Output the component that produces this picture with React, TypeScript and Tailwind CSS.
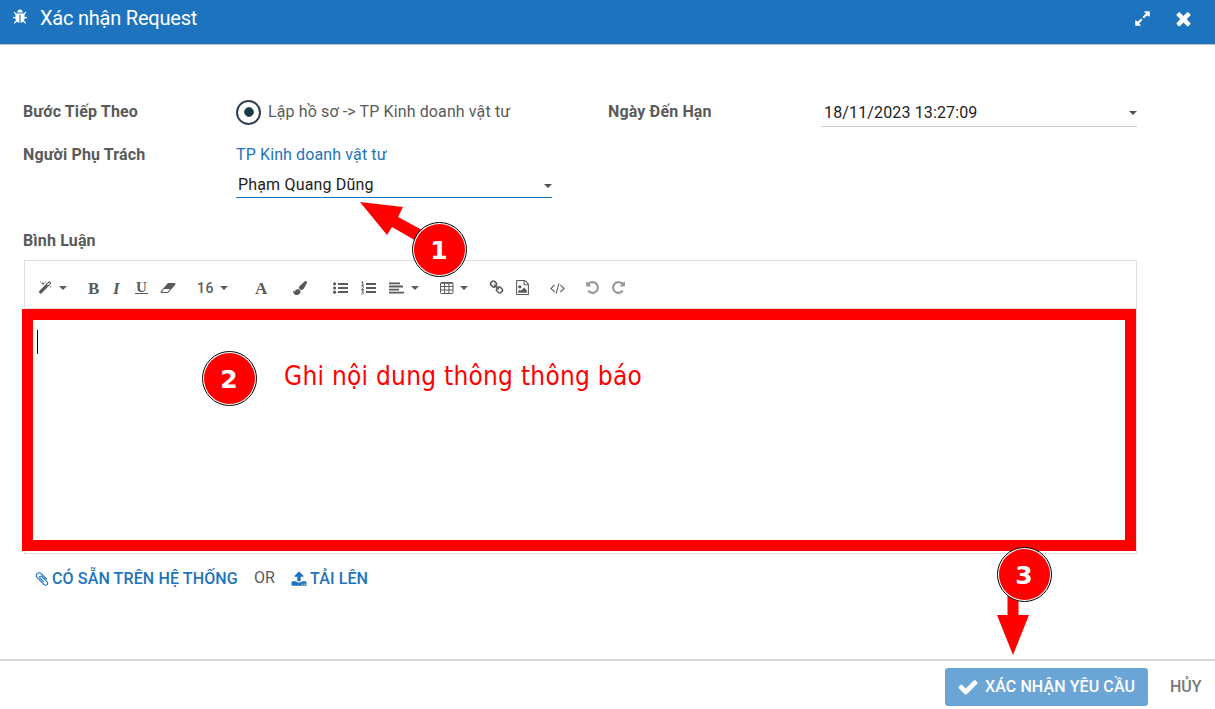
import type { ReactNode } from "react";

type GlyphProps = { d: string; box?: string; className?: string };

function Glyph({ d, box = "0 0 1792 1792", className = "" }: GlyphProps) {
  return (
    <svg viewBox={box} fill="currentColor" className={`shrink-0 ${className}`}>
      <path d={d} />
    </svg>
  );
}

const BUG =
  "M1696 960q0 26-19 45t-45 19h-224q0 171-67 290l208 209q19 19 19 45t-19 45q-18 19-45 19t-45-19l-198-197q-5 5-15 13t-42 28.5-65 36.5-82 29-97 13v-896h-128v896q-51 0-101.5-13.5t-87-33-66-39-43.5-32.5l-15-14-183 207q-20 21-48 21-24 0-43-16-19-18-20.5-44.5t15.5-46.5l202-227q-58-114-58-274h-224q-26 0-45-19t-19-45 19-45 45-19h224v-294l-173-173q-19-19-19-45t19-45 45-19 45 19l173 173h844l173-173q19-19 45-19t45 19 19 45-19 45l-173 173v294h224q26 0 45 19t19 45zm-480-576h-640q0-133 93.5-226.5t226.5-93.5 226.5 93.5 93.5 226.5z";
const CLOSE =
  "M1490 1322q0 40-28 68l-136 136q-28 28-68 28t-68-28l-294-294-294 294q-28 28-68 28t-68-28l-136-136q-28-28-28-68t28-68l294-294-294-294q-28-28-28-68t28-68l136-136q28-28 68-28t68 28l294 294 294-294q28-28 68-28t68 28l136 136q28 28 28 68t-28 68l-294 294 294 294q28 28 28 68z";
const EXPAND =
  "M883 1056q0 13-10 23l-332 332 144 144q19 19 19 45t-19 45-45 19h-448q-26 0-45-19t-19-45v-448q0-26 19-45t45-19 45 19l144 144 332-332q10-10 23-10t23 10l114 114q10 10 10 23zm781-864v448q0 26-19 45t-45 19-45-19l-144-144-332 332q-10 10-23 10t-23-10l-114-114q-10-10-10-23t10-23l332-332-144-144q-19-19-19-45t19-45 45-19h448q26 0 45 19t19 45z";
const CHECK =
  "M1671 566q0 40-28 68l-724 724-136 136q-28 28-68 28t-68-28l-136-136-362-362q-28-28-28-68t28-68l136-136q28-28 68-28t68 28l294 295 656-657q28-28 68-28t68 28l136 136q28 28 28 68z";
const UPLOAD =
  "M1344 1472q0-26-19-45t-45-19-45 19-19 45 19 45 45 19 45-19 19-45zm256 0q0-26-19-45t-45-19-45 19-19 45 19 45 45 19 45-19 19-45zm128-224v320q0 40-28 68t-68 28h-1472q-40 0-68-28t-28-68v-320q0-40 28-68t68-28h427q21 56 70.5 92t110.5 36h256q61 0 110.5-36t70.5-92h427q40 0 68 28t28 68zm-325-648q-17 40-59 40h-256v448q0 26-19 45t-45 19h-256q-26 0-45-19t-19-45v-448h-256q-42 0-59-40-17-39 14-69l448-448q18-19 45-19t45 19l448 448q31 30 14 69z";
const CLIP =
  "M1596 1385q0 117-79 196t-196 79q-135 0-235-100l-777-776q-113-115-113-271 0-159 110-270t269-111q158 0 273 113l605 606q10 10 10 22 0 16-30.5 46.5t-46.5 30.5q-13 0-23-10l-606-607q-79-77-181-77-106 0-179 75t-73 181q0 105 76 181l776 777q63 63 145 63 64 0 106-42t42-106q0-82-63-145l-581-581q-26-24-60-24-29 0-48 19t-19 48q0 32 25 59l410 410q10 10 10 22 0 16-31 47t-47 31q-12 0-22-10l-410-410q-63-61-63-149 0-82 57-139t139-57q88 0 149 63l581 581q100 98 100 235z";
const UNDO =
  "M1664 896q0 156-61 298t-164 245-245 164-298 61q-172 0-327-72.5t-264-204.5q-7-10-6.5-22.5t8.5-20.5l137-138q10-9 25-9 16 2 23 12 73 95 179 147t225 52q104 0 198.5-40.5t163.5-109.5 109.5-163.5 40.5-198.5-40.5-198.5-109.5-163.5-163.5-109.5-198.5-40.5q-98 0-188 35.5t-160 101.5l137 138q31 30 14 69-17 40-59 40h-448q-26 0-45-19t-19-45v-448q0-42 40-59 39-17 69 14l130 129q107-101 244.5-156.5t284.5-55.5q156 0 298 61t245 164 164 245 61 298z";
const LINK =
  "M1520 1216q0-40-28-68l-208-208q-28-28-68-28-42 0-72 32 3 3 19 18.5t21.5 21.5 15 19 13 25.5 3.5 27.5q0 40-28 68t-68 28q-15 0-27.5-3.5t-25.5-13-19-15-21.5-21.5-18.5-19q-33 31-33 73 0 40 28 68l206 207q27 27 68 27 40 0 68-26l147-146q28-28 28-67zm-703-705q0-40-28-68l-206-207q-28-28-68-28-39 0-68 27l-147 146q-28 28-28 67 0 40 28 68l208 208q27 27 68 27 42 0 72-31-3-3-19-18.5t-21.5-21.5-15-19-13-25.5-3.5-27.5q0-40 28-68t68-28q15 0 27.5 3.5t25.5 13 19 15 21.5 21.5 18.5 19q33-31 33-73zm895 705q0 120-85 203l-147 146q-83 83-203 83-121 0-204-85l-206-207q-83-83-83-203 0-123 88-209l-88-88q-86 88-208 88-120 0-204-84l-208-208q-84-84-84-204t85-203l147-146q83-83 203-83 121 0 204 85l206 207q83 83 83 203 0 123-88 209l88 88q86-88 208-88 120 0 204 84l208 208q84 84 84 204z";
const ERASER =
  "M960 1408l336-384h-768l-336 384h768zm1013-1077q15 34 9.500 71.500t-30.500 65.500l-896 1024q-38 44-96 44h-768q-38 0-69.500-20.500t-47.500-54.500q-15-34-9.500-71.500t30.500-65.500l896-1024q38-44 96-44h768q38 0 69.500 20.500t47.500 54.500z";
const CODE =
  "M617 1399l-50 50q-10 10-23 10t-23-10l-466-466q-10-10-10-23t10-23l466-466q10-10 23-10t23 10l50 50q10 10 10 23t-10 23l-393 393 393 393q10 10 10 23t-10 23zm591-1067l-373 1291q-4 13-15.5 19.5t-23.5 2.5l-62-17q-13-4-19.5-15.5t-2.500-24.500l373-1291q4-13 15.500-19.500t23.500-2.500l62 17q13 4 19.500 15.500t2.500 24.500zm657 651l-466 466q-10 10-23 10t-23-10l-50-50q-10-10-10-23t10-23l393-393-393-393q-10-10-10-23t10-23l50-50q10-10 23-10t23 10l466 466q10 10 10 23t-10 23z";
const BRUSH =
  "M1615 0q70 0 122.5 46.5t52.5 116.5q0 63-45 151-332 629-465 752-97 91-218 91-126 0-216.5-92.5t-90.5-219.5q0-128 92-212l638-579q59-54 130-54zm-909 1034q39 76 106.5 130t150.5 76l1 71q4 213-129.5 347t-348.5 134q-123 0-218-46.5t-152.5-127.5-86.5-183-29-220q7 5 41 30t62 44.5 59 36.5 46 17q41 0 55-37 25-66 57.5-112.5t69.5-76 88-47.5 103-25.5 125-10.5z";
const MAGIC =
  "M1254 581l293-293-107-107-293 293zm447-293q0 27-18 45l-1286 1286q-18 18-45 18t-45-18l-198-198q-18-18-18-45t18-45l1286-1286q18-18 45-18t45 18l198 198q18 18 18 45zm-1351-190l98 30-98 30-30 98-30-98-98-30 98-30 30-98zm350 162l196 60-196 60-60 196-60-196-196-60 196-60 60-196zm930 478l98 30-98 30-30 98-30-98-98-30 98-30 30-98zm-640-640l98 30-98 30-30 98-30-98-98-30 98-30 30-98z";
const PICTURE =
  "M1596 380q28 28 48 76t20 88v1152q0 40-28 68t-68 28h-1344q-40 0-68-28t-28-68v-1600q0-40 28-68t68-28h896q40 0 88 20t76 48zm-444-244v376h376q-10-29-22-41l-313-313q-12-12-41-22zm384 1528v-1024h-416q-40 0-68-28t-28-68v-416h-768v1536h1280zm-128-448v320h-1024v-192l192-192 128 128 384-384zm-832-192q-80 0-136-56t-56-136 56-136 136-56 136 56 56 136-56 136-136 56z";

function Caret({ className = "" }: { className?: string }) {
  return (
    <svg viewBox="0 0 8 4" fill="currentColor" className={`h-1 w-2 shrink-0 ${className}`}>
      <path d="M0 0h8L4 4z" />
    </svg>
  );
}

function Serif({ children, className = "" }: { children: ReactNode; className?: string }) {
  return (
    <span className={`font-['Liberation_Serif',serif] text-[17px] leading-5 ${className}`}>
      {children}
    </span>
  );
}

function Toolbar() {
  return (
    <div className="flex h-12 items-center border-b border-[#ddd] pt-1.5 pl-[13px] text-[#5a5a5a]">
      <Glyph d={MAGIC} className="size-3.5" />
      <Caret className="ml-[7px]" />
      <Serif className="mt-0.5 ml-[21px] w-[11px] font-bold">B</Serif>
      <Serif className="mt-0.5 ml-[14px] w-[9px] font-bold italic">I</Serif>
      <span className="ml-[13px] flex h-[13px] w-[13px] justify-center border-b border-[#5a5a5a]">
        <Serif className="-mt-1 text-[15px]! font-bold">U</Serif>
      </span>
      <Glyph d={ERASER} box="0 0 2048 1792" className="ml-3 h-3.5 w-4" />
      <span className="mt-px ml-[21px] w-4 text-[14px] font-medium tracking-[0.5px]">16</span>
      <Caret className="ml-[7px]" />
      <Serif className="mt-0.5 ml-[27px] w-3 font-bold">A</Serif>
      <Glyph d={BRUSH} className="ml-[26px] size-3.5" />
      <svg viewBox="0 0 15 12" fill="currentColor" className="ml-[26px] h-3 w-[15px]">
        <circle cx="1.600" cy="1.800" r="1.600" />
        <circle cx="1.600" cy="6" r="1.600" />
        <circle cx="1.600" cy="10.200" r="1.600" />
        <path d="M5 1h10v2H5zM5 5h10v2H5zM5 9h10V11H5z" />
      </svg>
      <svg viewBox="0 0 15 14" fill="none" stroke="currentColor" className="ml-[13px] h-3.5 w-[15px]">
        <path d="M5 3h10M5 7h10M5 11h10" strokeWidth="2" />
        <path d="M.5 1.200 1.700.5v3.700M.4 4.200h2.500M.5 6q1-1 1.900-.3.500.8-.5 1.500L.7 8.500h2.200M.4 9.900h2L1.500 11.300q1.300.2.900 1.200-.7 1-2 .3" strokeWidth="1" />
      </svg>
      <svg viewBox="0 0 15 12" fill="currentColor" className="ml-[13px] h-3 w-[15px]">
        <path d="M0 .5h11v1.800H0zM0 3.600h14v1.800H0zM0 6.700h10v1.800H0zM0 9.800h15v1.800H0z" />
      </svg>
      <Caret className="ml-[7px]" />
      <svg viewBox="0 0 14 12" fill="none" stroke="currentColor" className="ml-[21px] h-3 w-3.5">
        <rect x=".5" y=".5" width="12.500" height="11" rx="1" />
        <path d="M.5 1.300H13M.5 4.500H13M.5 8H13M4.600 1v10M8.900 1v10" />
      </svg>
      <Caret className="ml-1.5" />
      <Glyph d={LINK} className="ml-[21px] size-[15px]" />
      <Glyph d={PICTURE} className="ml-[11px] size-[15px]" />
      <Glyph d={CODE} box="0 0 1920 1792" className="ml-5 h-3.5 w-[15px]" />
      <Glyph d={UNDO} className="ml-5 size-[15px] text-[#999]" />
      <Glyph d={UNDO} className="ml-[11px] size-[15px] -scale-x-100 text-[#999]" />
    </div>
  );
}

function Step({ n, className }: { n: number; className: string }) {
  return (
    <div
      className={`absolute flex size-[55px] items-center justify-center rounded-full border-[1.500px] border-black bg-white p-[1px] ${className}`}
    >
      <div className="flex size-full items-center justify-center rounded-full bg-[#f00] pt-[3px] font-['DejaVu_Sans',sans-serif] text-[25px] leading-none font-bold text-white">
        {n}
      </div>
    </div>
  );
}

export default function App() {
  return (
    <div className="relative flex h-[709px] w-[1215px] flex-col overflow-hidden bg-white font-['Roboto',sans-serif] text-[16px] leading-6 text-[#5a5a5a]">
      <header className="flex h-[45px] shrink-0 items-center border-b border-[#bcc5cc] bg-[#1e73be] pr-[21px] pb-2 pl-3 text-white">
        <Glyph d={BUG} className="-mt-0.5 size-4" />
        <h1 className="ml-3 grow text-[20px] leading-6 tracking-[-0.22px]">Xác nhận Request</h1>
        <Glyph d={EXPAND} className="size-[17px]" />
        <Glyph d={CLOSE} className="mt-px ml-[22px] size-[21px]" />
      </header>

      <main className="flex grow flex-col pl-6">
        <div className="mt-[55px] flex h-[98px]">
          <div className="-ml-px flex w-[213px] flex-col gap-[19px] font-bold tracking-[0.14px]">
            <span>Bước Tiếp Theo</span>
            <span>Người Phụ Trách</span>
          </div>
          <div className="flex w-[316px] flex-col tracking-[0.12px]">
            <label className="flex h-6 items-center whitespace-nowrap">
              <span className="flex size-[25px] shrink-0 items-center justify-center rounded-full border-2 border-[#2c3e50]">
                <span className="size-[10px] rounded-full border border-[#555] bg-[#123c4c]" />
              </span>
              <span className="ml-[7px]">Lập hồ sơ -&gt; TP Kinh doanh vật tư</span>
            </label>
            <span className="mt-[19px] text-[#1e73be]">TP Kinh doanh vật tư</span>
            <div className="mt-1 flex h-[27px] items-center justify-between border-b border-[#1e73be] pl-0.5 tracking-[0.17px] text-[#222]">
              <span className="pt-0.5">Phạm Quang Dũng</span>
              <Caret className="mt-[3px] text-[#505050]" />
            </div>
          </div>
          <span className="ml-14 w-[213px] font-bold tracking-[0.14px]">Ngày Đến Hạn</span>
          <div className="flex h-[27px] w-[316px] items-center justify-between border-b border-[#ccc] pl-[3px] tracking-[0.14px] text-[#222]">
            18/11/2023 13:27:09
            <Caret className="text-[#505050]" />
          </div>
        </div>

        <span className="mt-[31px] -ml-px font-bold tracking-[0.14px]">Bình Luận</span>

        <section className="mt-[7px] h-[294px] w-[1113px] border border-[#dcdfe3]">
          <Toolbar />
          <div className="pt-[21px] pl-3">
            <div className="h-6 w-px bg-black" />
          </div>
        </section>

        <div className="mt-[13px] flex items-center pl-2.5 font-medium tracking-[0.13px] text-[#1e73be]">
          <Glyph d={CLIP} className="size-4" />
          <span className="ml-0.5">CÓ SẴN TRÊN HỆ THỐNG</span>
          <span className="-mt-0.5 ml-4 font-normal text-[#5a5a5a]">OR</span>
          <Glyph d={UPLOAD} className="ml-4 size-4" />
          <span className="ml-[3px]">TẢI LÊN</span>
        </div>
      </main>

      <footer className="flex h-[50px] shrink-0 items-start border-t-2 border-[#d2d6da] pt-[7px] pl-[945px] font-medium">
        <button className="flex h-[38px] w-[203px] shrink-0 items-center rounded-[3px] bg-[#6ba5d5] pl-3 tracking-[0.1px] whitespace-nowrap text-white">
          <Glyph d={CHECK} className="size-[22px]" />
          <span className="ml-[6px]">XÁC NHẬN YÊU CẦU</span>
        </button>
        <button className="ml-[22px] h-[38px] text-[#777]">HỦY</button>
      </footer>

      <div className="absolute top-[309px] left-[22px] h-[242px] w-[1114px] border-[11px] border-[#f00]" />
      <span className="absolute top-[358px] left-[284px] font-['DejaVu_Sans_Condensed','DejaVu_Sans',sans-serif] text-[26px] leading-9 tracking-[0.25px] whitespace-nowrap text-[#f00] [font-stretch:condensed]">
        Ghi nội dung thông thông báo
      </span>
      <svg viewBox="0 0 70 50" fill="#f00" className="absolute top-[200px] left-[358px] h-[50px] w-[70px]">
        <path d="M2 2 45 7 40 17 66 31 60 42 34 27 29 35z" />
      </svg>
      <svg viewBox="0 0 32 60" fill="#f00" className="absolute top-[595px] left-[997px] h-[60px] w-8">
        <path d="M10.500 0h11v20H32L16 60 0 20h10.500z" />
      </svg>
      <Step n={1} className="top-[221.500px] left-[411.500px]" />
      <Step n={2} className="top-[350.500px] left-[201.500px]" />
      <Step n={3} className="top-[546.500px] left-[996.500px]" />
    </div>
  );
}
